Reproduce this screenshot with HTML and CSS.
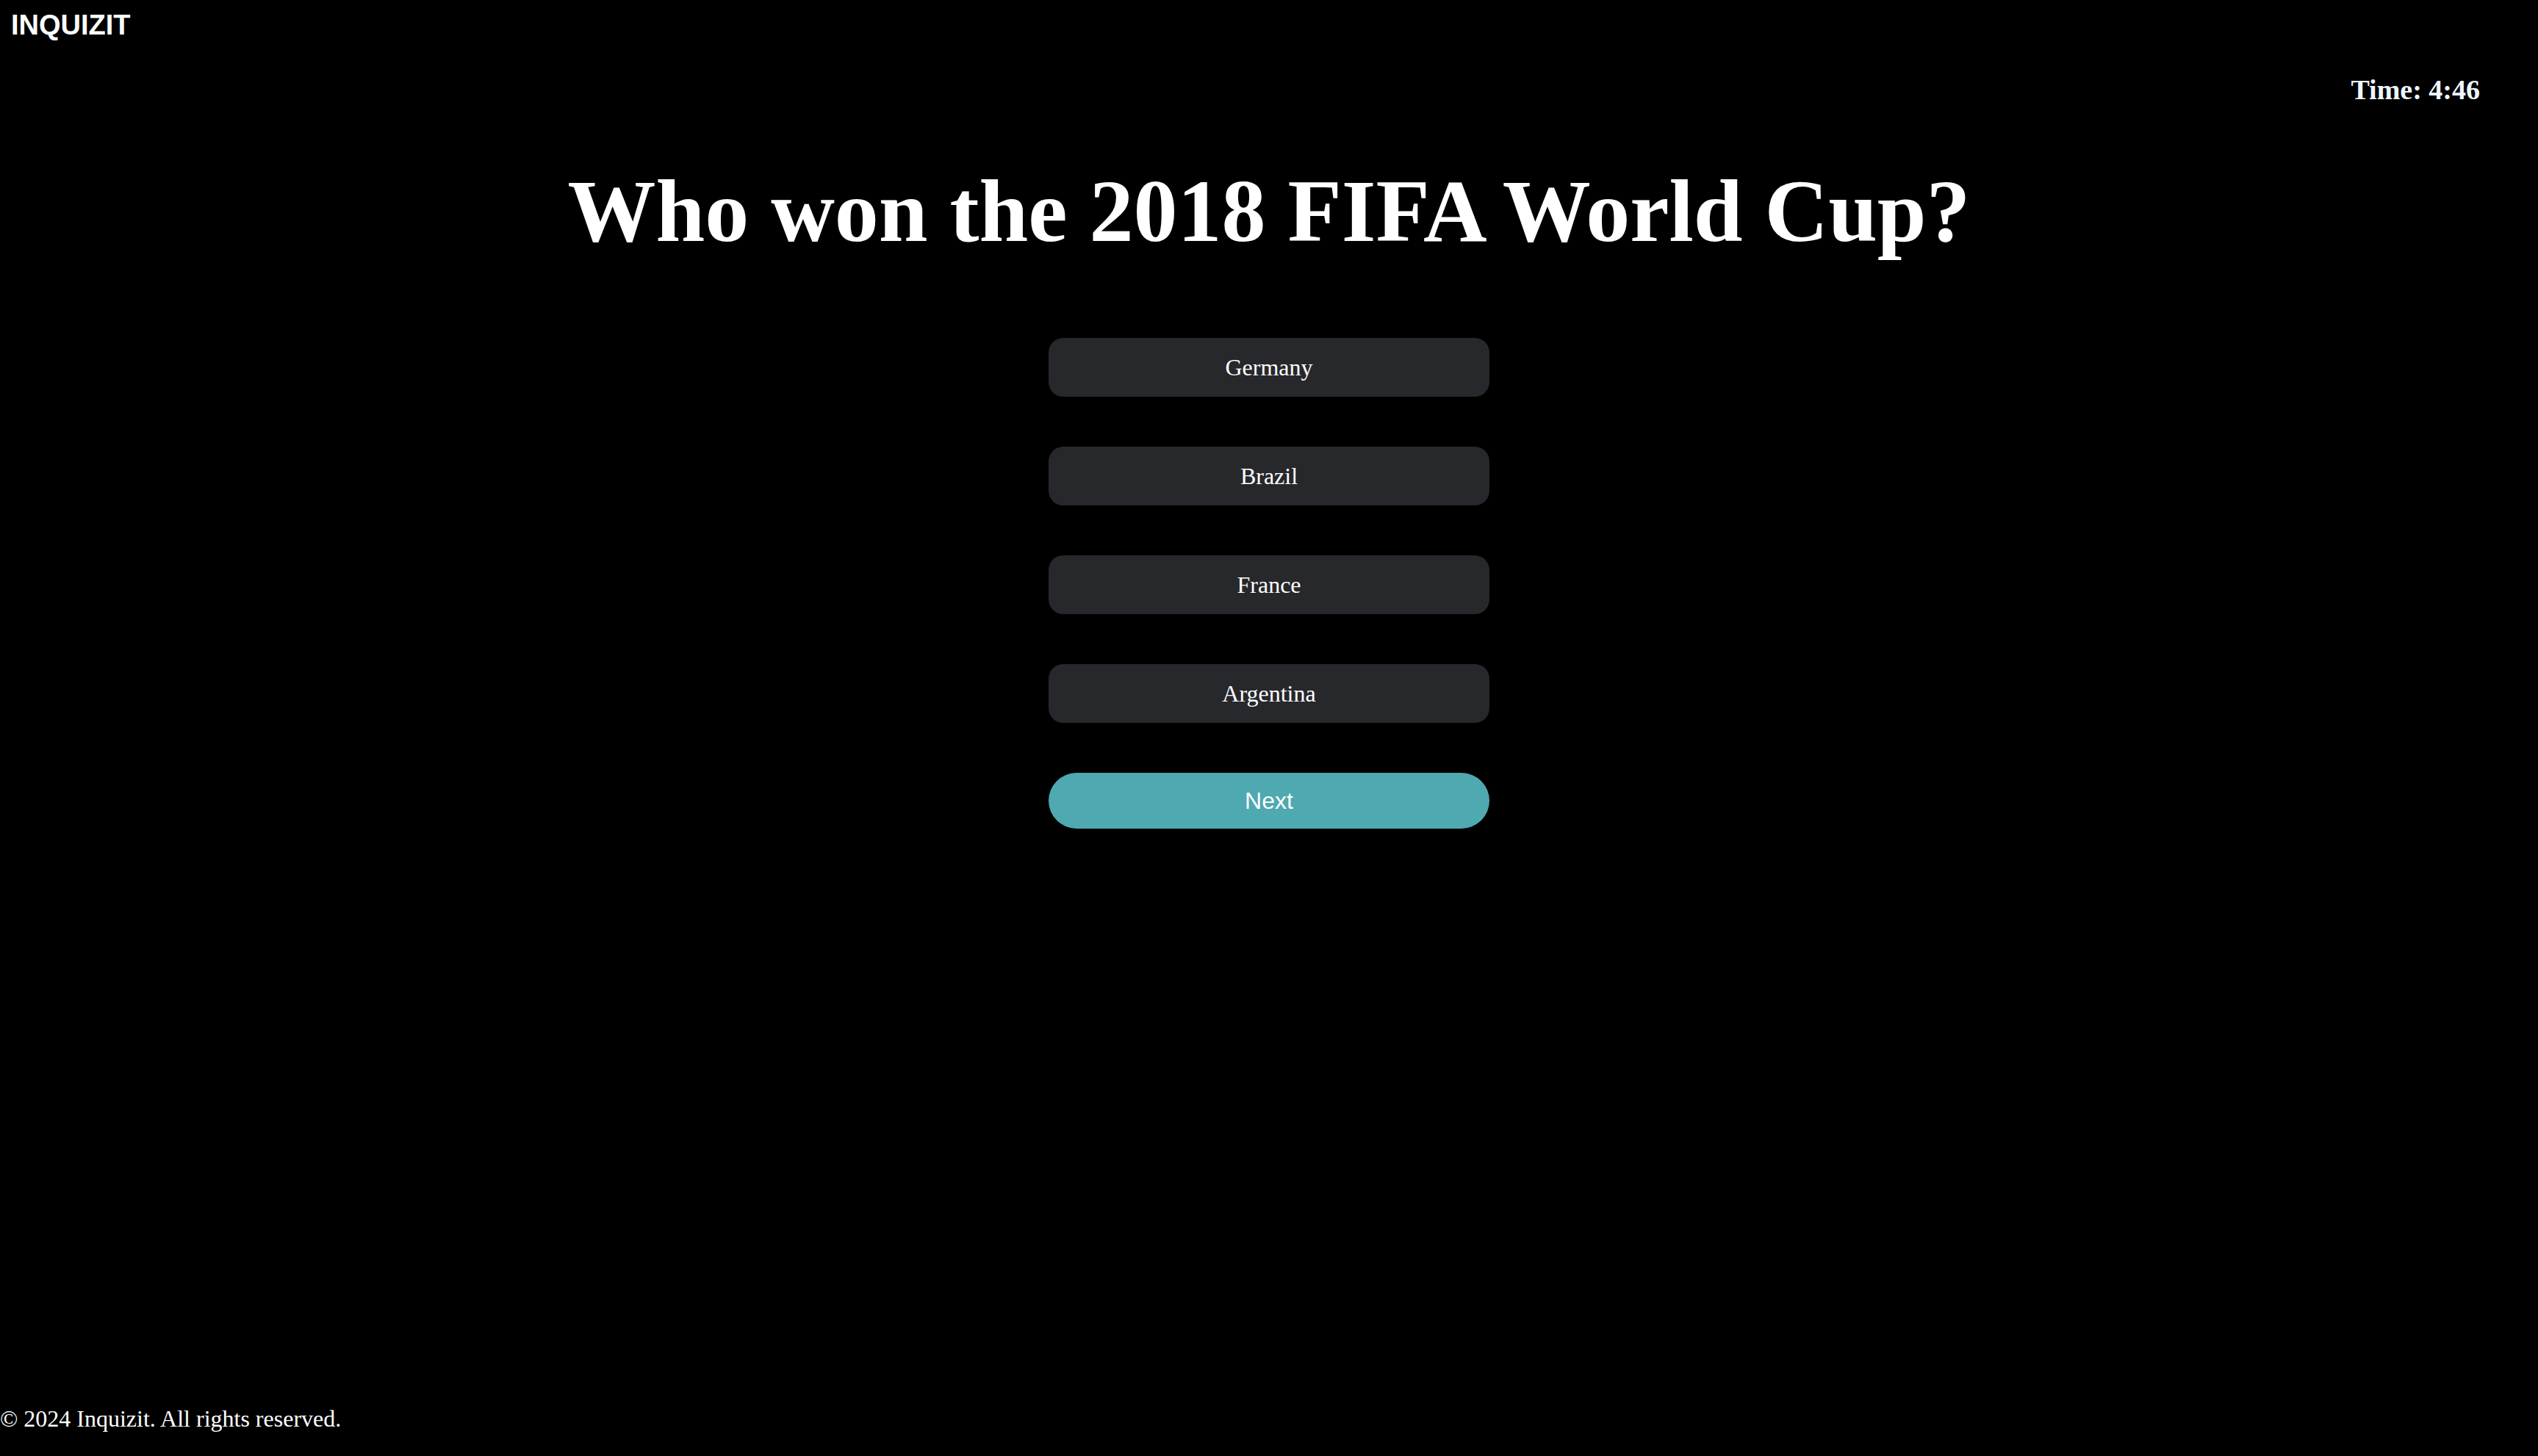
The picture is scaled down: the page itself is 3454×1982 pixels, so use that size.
FILE: index.html
```html
<!DOCTYPE html>
<html lang="en">
<head>
<meta charset="utf-8">
<title>Inquizit</title>
<link rel="stylesheet" href="styles.css">
</head>
<body>
  <header class="topbar">
    <div class="logo">INQUIZIT</div>
  </header>
  <div class="timer-row">
    <div class="timer">Time: 4:46</div>
  </div>
  <main class="quiz">
    <h1 class="question">Who won the 2018 FIFA World Cup?</h1>
    <div class="options">
      <button class="option">Germany</button>
      <button class="option">Brazil</button>
      <button class="option">France</button>
      <button class="option">Argentina</button>
      <button class="next">Next</button>
    </div>
  </main>
  <footer class="footer">© 2024 Inquizit. All rights reserved.</footer>
</body>
</html>
```
FILE: styles.css
```css
html, body {
  margin: 0;
  padding: 0;
  background: #000;
}
body {
  min-height: 100vh;
  display: flex;
  flex-direction: column;
  color: #fff;
  font-family: "Liberation Serif", "Times New Roman", serif;
}
.topbar {
  padding: 13px 0 0 15px;
}
.logo {
  font-family: "Liberation Sans", Arial, sans-serif;
  font-weight: 700;
  font-size: 38px;
  line-height: normal;
  color: #fff;
}
.timer-row {
  display: flex;
  justify-content: flex-end;
  padding: 44px 79px 0 0;
}
.timer {
  font-weight: 700;
  font-size: 38px;
  line-height: normal;
  color: #eef5fd;
}
.quiz {
  display: flex;
  flex-direction: column;
  align-items: center;
}
.question {
  margin: 75px 0 0;
  font-size: 120px;
  font-weight: 700;
  line-height: normal;
  text-align: center;
}
.options {
  margin-top: 103px;
  display: flex;
  flex-direction: column;
  gap: 68px;
  width: 600px;
}
.option {
  height: 80px;
  border: none;
  border-radius: 20px;
  background: #27282c;
  color: #fff;
  font-family: "Liberation Serif", "Times New Roman", serif;
  font-size: 32px;
  padding: 0;
}
.next {
  height: 76px;
  border: none;
  border-radius: 38px;
  background: #4ea9b1;
  color: #fff;
  font-family: "Liberation Sans", Arial, sans-serif;
  font-size: 32px;
  padding: 0;
}
.footer {
  margin-top: auto;
  padding: 0 0 32px 0;
  font-size: 32px;
  line-height: normal;
}
```
